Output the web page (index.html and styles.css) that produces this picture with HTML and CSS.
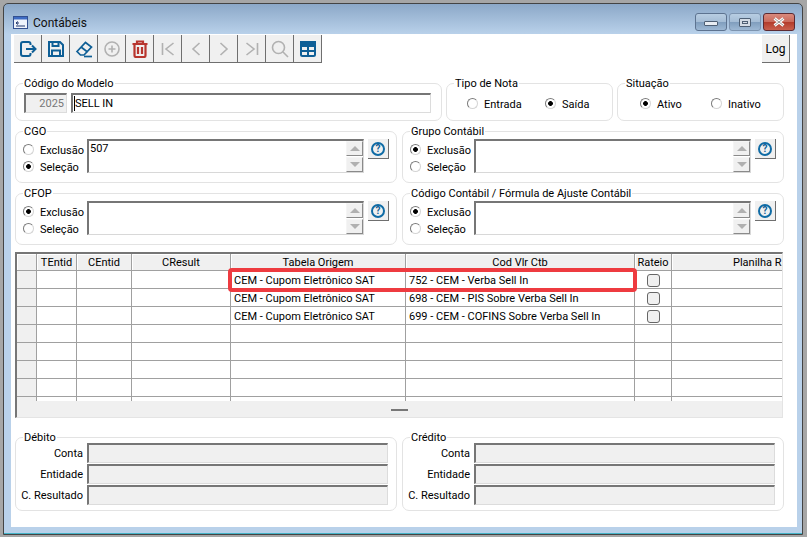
FILE: index.html
```html
<!DOCTYPE html>
<html lang="pt-BR">
<head>
<meta charset="utf-8">
<title>Contábeis</title>
<link rel="stylesheet" href="styles.css">
</head>
<body>
<div class="window">
  <header class="titlebar">
    <svg class="appicon" width="15" height="13" viewBox="0 0 15 13"><rect x="0.5" y="0.5" width="14" height="12" fill="#eef3fb" stroke="#33508f"/><rect x="1" y="1" width="13" height="2.5" fill="#3f6cc4"/><path d="M3 7h3M5 5.500 3 7l2 1.500M3 10h9" stroke="#22386e" fill="none"/></svg>
    <span class="wintitle">Contábeis</span>
    <div class="winbtns">
      <div class="winbtn"><span class="glyph-min"></span></div>
      <div class="winbtn"><span class="glyph-max"></span></div>
      <div class="winbtn close"><svg width="16" height="10" viewBox="0 0 16 10"><path d="M3.500 1.500 12.500 8.500M12.500 1.500 3.500 8.500" stroke="#fff" stroke-width="3" fill="none"/><path d="M3.500 1.500 12.500 8.500M12.500 1.500 3.500 8.500" stroke="#6b6b6b" stroke-width="0.700" fill="none"/></svg></div>
    </div>
  </header>
  <main class="client">
    <div class="toolbar-row">
      <div class="toolbar">
        <div class="tool"><svg class="ic blue" viewBox="0 0 18 18"><path d="M11.500 5V4a2 2 0 0 0-2-2H4a2 2 0 0 0-2 2v10a2 2 0 0 0 2 2h5.500a2 2 0 0 0 2-2v-1"/><path d="M7 9h9.500M13 5.500 16.500 9 13 12.500"/></svg></div>
        <div class="tool"><svg class="ic blue" viewBox="0 0 18 18"><path d="M2 2h11l3 3v11H2z"/><path d="M5.500 2v4h6V2M5 16v-5.500h8V16"/></svg></div>
        <div class="tool"><svg class="ic blue thin" viewBox="0 0 18 18"><path d="M2 11.500 10.500 2.500l6 4.500-7.500 8H5.500z"/><path d="M6 7 12.500 12"/><path d="M9 16.500h8"/></svg></div>
        <div class="tool"><svg class="ic gray" viewBox="0 0 18 18"><circle cx="9" cy="9" r="7"/><path d="M9 5.500v7M5.500 9h7"/></svg></div>
        <div class="tool"><svg class="ic red" viewBox="0 0 18 18"><path d="M1.500 4h15M6 3.500V1.500h6v2"/><path d="M3.500 4.500v11a1.500 1.500 0 0 0 1.500 1.500h8a1.500 1.500 0 0 0 1.500-1.500v-11M7 7v7M11 7v7"/></svg></div>
        <div class="tool"><svg class="ic gray" viewBox="0 0 18 18"><path d="M3.500 3v12M14.500 3 7 9l7.500 6"/></svg></div>
        <div class="tool"><svg class="ic gray" viewBox="0 0 18 18"><path d="M12.500 3 6 9l6.500 6"/></svg></div>
        <div class="tool"><svg class="ic gray" viewBox="0 0 18 18"><path d="M5.500 3 12 9l-6.500 6"/></svg></div>
        <div class="tool"><svg class="ic gray" viewBox="0 0 18 18"><path d="M3.500 3 11 9l-7.500 6M14.500 3v12"/></svg></div>
        <div class="tool"><svg class="ic gray" viewBox="0 0 18 18"><circle cx="7.500" cy="7.500" r="6"/><path d="M12 12l5 5"/></svg></div>
        <div class="tool"><svg class="ic blue" viewBox="0 0 18 18"><rect x="2" y="2" width="14" height="14" rx="1.500"/><path class="solid" d="M2 2h14v4H2z"/><path d="M9 6v10M2 11h14"/></svg></div>
      </div>
      <div class="tool log">Log</div>
    </div>

    <div class="row row-top">
      <section class="group g-model">
        <h2 class="legend">Código do Modelo</h2>
        <div class="model-fields">
          <div class="field code">2025</div>
          <div class="field name"><span class="caret">SELL IN</span></div>
        </div>
      </section>
      <section class="group g-note">
        <h2 class="legend">Tipo de Nota</h2>
        <div class="choice-row note-row">
          <label class="radio"><i class="dot"></i><span>Entrada</span></label>
          <label class="radio"><i class="dot on"></i><span>Saída</span></label>
        </div>
      </section>
      <section class="group g-status">
        <h2 class="legend">Situação</h2>
        <div class="choice-row status-row">
          <label class="radio"><i class="dot on"></i><span>Ativo</span></label>
          <label class="radio"><i class="dot"></i><span>Inativo</span></label>
        </div>
      </section>
    </div>

    <div class="row row-pair">
      <section class="group picker">
        <h2 class="legend">CGO</h2>
        <div class="radios">
          <label class="radio"><i class="dot"></i><span>Exclusão</span></label>
          <label class="radio"><i class="dot on"></i><span>Seleção</span></label>
        </div>
        <div class="memo"><span class="memo-text">507</span><div class="scroll"><span class="sb up"></span><span class="sb down"></span></div></div>
        <div class="help"><span class="q">?</span></div>
      </section>
      <section class="group picker">
        <h2 class="legend">Grupo Contábil</h2>
        <div class="radios">
          <label class="radio"><i class="dot on"></i><span>Exclusão</span></label>
          <label class="radio"><i class="dot"></i><span>Seleção</span></label>
        </div>
        <div class="memo"><span class="memo-text"></span><div class="scroll"><span class="sb up"></span><span class="sb down"></span></div></div>
        <div class="help"><span class="q">?</span></div>
      </section>
    </div>

    <div class="row row-pair">
      <section class="group picker">
        <h2 class="legend">CFOP</h2>
        <div class="radios">
          <label class="radio"><i class="dot on"></i><span>Exclusão</span></label>
          <label class="radio"><i class="dot"></i><span>Seleção</span></label>
        </div>
        <div class="memo"><span class="memo-text"></span><div class="scroll"><span class="sb up"></span><span class="sb down"></span></div></div>
        <div class="help"><span class="q">?</span></div>
      </section>
      <section class="group picker">
        <h2 class="legend">Código Contábil / Fórmula de Ajuste Contábil</h2>
        <div class="radios">
          <label class="radio"><i class="dot on"></i><span>Exclusão</span></label>
          <label class="radio"><i class="dot"></i><span>Seleção</span></label>
        </div>
        <div class="memo"><span class="memo-text"></span><div class="scroll"><span class="sb up"></span><span class="sb down"></span></div></div>
        <div class="help"><span class="q">?</span></div>
      </section>
    </div>

    <div class="gridbox">
      <div class="gridscroll">
        <table class="grid">
          <colgroup><col class="c0"><col class="c1"><col class="c2"><col class="c3"><col class="c4"><col class="c5"><col class="c6"><col class="c7"></colgroup>
          <thead><tr><th></th><th>TEntid</th><th>CEntid</th><th>CResult</th><th>Tabela Origem</th><th>Cod Vlr Ctb</th><th>Rateio</th><th class="partial">Planilha R.</th></tr></thead>
          <tbody>
            <tr><td class="ind"></td><td></td><td></td><td></td><td>CEM - Cupom Eletrônico SAT</td><td>752 - CEM - Verba Sell In</td><td class="chk"><span class="box"></span></td><td></td></tr>
            <tr><td class="ind"></td><td></td><td></td><td></td><td>CEM - Cupom Eletrônico SAT</td><td>698 - CEM - PIS Sobre Verba Sell In</td><td class="chk"><span class="box"></span></td><td></td></tr>
            <tr><td class="ind"></td><td></td><td></td><td></td><td>CEM - Cupom Eletrônico SAT</td><td>699 - CEM - COFINS Sobre Verba Sell In</td><td class="chk"><span class="box"></span></td><td></td></tr>
            <tr><td class="ind"></td><td></td><td></td><td></td><td></td><td></td><td></td><td></td></tr>
            <tr><td class="ind"></td><td></td><td></td><td></td><td></td><td></td><td></td><td></td></tr>
            <tr><td class="ind"></td><td></td><td></td><td></td><td></td><td></td><td></td><td></td></tr>
            <tr><td class="ind"></td><td></td><td></td><td></td><td></td><td></td><td></td><td></td></tr>
            <tr><td class="ind"></td><td></td><td></td><td></td><td></td><td></td><td></td><td></td></tr>
          </tbody>
        </table>
        <div class="highlight"></div>
      </div>
      <div class="gridfoot"><span class="grip"></span></div>
    </div>

    <div class="row row-pair row-bottom">
      <section class="group account">
        <h2 class="legend">Débito</h2>
        <div class="acc-row"><span class="acc-label">Conta</span><div class="field ro"></div></div>
        <div class="acc-row"><span class="acc-label">Entidade</span><div class="field ro"></div></div>
        <div class="acc-row"><span class="acc-label">C. Resultado</span><div class="field ro"></div></div>
      </section>
      <section class="group account">
        <h2 class="legend">Crédito</h2>
        <div class="acc-row"><span class="acc-label">Conta</span><div class="field ro"></div></div>
        <div class="acc-row"><span class="acc-label">Entidade</span><div class="field ro"></div></div>
        <div class="acc-row"><span class="acc-label">C. Resultado</span><div class="field ro"></div></div>
      </section>
    </div>
  </main>
</div>
</body>
</html>
```
FILE: styles.css
```css
* { box-sizing: border-box; }
html, body { margin: 0; height: 100%; }
body {
  width: 807px;
  height: 537px;
  padding: 3px;
  overflow: hidden;
  background: #a6a6a6;
  font-family: Roboto, "Liberation Sans", Arial, sans-serif;
  font-size: 11px;
  color: #000;
}
.window {
  width: 800px;
  height: 532px;
  border: 1px solid #444;
  border-radius: 5px 5px 0 0;
  padding: 0 5px 7px 7px;
  background: linear-gradient(#8ca8c8, #b9d1ea) top / 100% 30px no-repeat, #b9d1ea;
  box-shadow: inset 0 -1px 0 #45b4c8;
}
.titlebar {
  height: 30px;
  display: flex;
  align-items: flex-start;
  padding: 9px 2px 0;
}
.appicon { margin-top: 3px; flex: none; }
.wintitle { margin: 3px 0 0 5px; font-size: 12px; color: #101010; }
.winbtns { margin-left: auto; display: flex; gap: 2px; }
.winbtn {
  width: 32px;
  height: 18px;
  border: 1px solid #5d7390;
  border-radius: 3px;
  background: linear-gradient(#b8cde2 0, #a5bdd6 48%, #7f9dbd 50%, #9db8d4 100%);
  display: flex;
  align-items: center;
  justify-content: center;
}
.winbtn + .winbtn { border-color: #7d94b0; }
.winbtn.close {
  border-color: #5c2a32;
  background: linear-gradient(#d98a7e 0, #ca6a5c 48%, #b23a2a 50%, #c9604e 100%);
}
.glyph-min { width: 14px; height: 5px; margin-top: 3px; background: #e8edf3; border: 1px solid #4e5f74; border-radius: 1px; }
.glyph-max { width: 12px; height: 9px; background: #d3dbe5; border: 1px solid #4e5f74; border-radius: 1px; box-shadow: inset 0 0 0 2px #d3dbe5, inset 0 0 0 3px #4e5f74; }

.client {
  width: 786px;
  height: 493px;
  background: #fff;
  padding-top: 1px;
}
.toolbar-row { display: flex; padding: 0 7px 0 3px; justify-content: space-between; }
.toolbar { display: flex; }
.tool {
  width: 28px;
  height: 28px;
  background: #f0f0f0;
  border-right: 1px solid #6f6f6f;
  border-bottom: 1px solid #6f6f6f;
  display: flex;
  align-items: center;
  justify-content: center;
}
.tool.log { font-size: 12px; }
.ic { width: 18px; height: 18px; fill: none; stroke-width: 2; }
.ic.blue { stroke: #0f5f96; }
.ic.blue.thin { stroke-width: 1.700; }
.ic.gray { stroke: #b1b1b1; stroke-width: 1.600; }
.ic.red { stroke: #b8352e; stroke-width: 2.200; }
.ic .solid { fill: #0f5f96; }

.row { display: flex; margin: 10px 13px 0 4px; justify-content: space-between; }
.row-top { margin-top: 20px; height: 38px; }
.row-pair { height: 52px; }
.row-bottom { margin-top: 19px; height: 74px; }

.group {
  position: relative;
  border: 1px solid #e3e3e3;
  border-radius: 7px;
  background: #fff;
}
.legend {
  position: absolute;
  left: 7px;
  top: -7px;
  margin: 0;
  padding: 0 1px;
  background: #fff;
  font: inherit;
  line-height: 13px;
  white-space: nowrap;
}
.g-model { width: 427px; padding: 9px 0 0 8px; }
.g-note { width: 167px; margin-left: 4px; }
.g-status { width: 167px; margin-left: 4px; }
.model-fields { display: flex; gap: 4px; }

.field {
  height: 20px;
  border-style: solid;
  border-width: 2px 1px 1px 2px;
  border-color: #767676 #dcdcdc #dcdcdc #767676;
  line-height: 17px;
}
.field.code { width: 43px; background: #f0f0f0; color: #777; text-align: right; padding-right: 2px; }
.field.name { width: 360px; padding-left: 1px; background: #fff; }
.caret { border-left: 1px solid #000; display: inline-block; line-height: 15px; }
.field.ro { flex: 1; background: #f0f0f0; }

.choice-row { display: grid; }
.note-row { grid-template-columns: 78px auto; padding: 11px 0 0 20px; }
.status-row { grid-template-columns: 71px auto; padding: 11px 0 0 22px; }
.radio { display: flex; align-items: center; gap: 6px; height: 17px; }
.radio span { padding-top: 1px; }
.dot {
  flex: none;
  width: 11px;
  height: 11px;
  border-radius: 50%;
  border: 1px solid;
  border-color: #7b7b7b #d4d4d4 #d4d4d4 #7b7b7b;
  background: #fff;
}
.dot.on { background: radial-gradient(circle at center, #000 0, #000 2px, #fff 2.800px); }

.picker { width: 382px; display: flex; padding: 7px 0 0 7px; }
.radios { width: 64px; padding-top: 2px; flex: none; }
.memo {
  width: 277px;
  height: 34px;
  display: flex;
  border-style: solid;
  border-width: 2px 1px 1px 2px;
  border-color: #767676 #d8d8d8 #d8d8d8 #767676;
}
.memo-text { flex: 1; padding-left: 1px; line-height: 16px; }
.scroll { width: 17px; display: flex; flex-direction: column; gap: 1px; }
.sb {
  flex: 1;
  background: #f0f0f0;
  border: 1px solid #dcdcdc;
  border-color: #f5f5f5 #8a8a8a #8a8a8a #f5f5f5;
  display: flex;
  align-items: center;
  justify-content: center;
}
.sb::before { content: ""; border: 5px solid transparent; }
.sb.up::before { border-top: 0; border-bottom: 5px solid #b0b0b0; }
.sb.down::before { border-bottom: 0; border-top: 5px solid #b0b0b0; }
.help {
  width: 21px;
  height: 20px;
  margin-left: 4px;
  background: #f0f0f0;
  border-right: 1px solid #6f6f6f;
  border-bottom: 1px solid #6f6f6f;
  display: flex;
  align-items: center;
  justify-content: center;
}
.q {
  width: 14px;
  height: 14px;
  border: 2px solid #0f6ba5;
  border-radius: 50%;
  color: #0f5f96;
  font-weight: bold;
  font-size: 10px;
  line-height: 10px;
  text-align: center;
}

.gridbox {
  margin: 7px 14px 0 4px;
  height: 166px;
  border-style: solid;
  border-width: 2px 1px 1px 2px;
  border-color: #767676 #e4e4e4 #e4e4e4 #767676;
}
.gridscroll { position: relative; height: 147px; overflow: hidden; }
.grid { table-layout: fixed; width: 766px; border-collapse: separate; border-spacing: 0; }
.c0 { width: 20px; } .c1 { width: 40px; } .c2 { width: 55px; } .c3 { width: 99px; }
.c4 { width: 175px; } .c5 { width: 229px; } .c6 { width: 37px; } .c7 { width: 111px; }
.grid th, .grid td {
  padding: 1px 0 0 3px;
  border-right: 1px solid #a0a0a0;
  border-bottom: 1px solid #a0a0a0;
  white-space: nowrap;
  overflow: hidden;
}
.grid th:last-child, .grid td:last-child { border-right: 0; }
.grid th {
  height: 17px;
  padding: 1px 0 0;
  background: #f0f0f0;
  font-weight: normal;
  text-align: center;
  box-shadow: inset 1px 1px 0 #fff;
}
.grid th.partial { text-align: left; padding-left: 61px; }
.grid td { height: 18px; }
.grid td.ind { background: #f0f0f0; padding: 0; }
.grid td.chk { padding: 0; text-align: center; }
.box {
  display: block;
  width: 13px;
  height: 13px;
  margin: 2px 0 0 12px;
  background: #f0f0f0;
  border: 1px solid #666;
  border-radius: 3px;
}
.highlight {
  position: absolute;
  left: 211px;
  top: 14px;
  width: 409px;
  height: 24px;
  border: 4px solid #ee3b40;
  border-radius: 4px;
}
.gridfoot {
  height: 16px;
  background: #f0f0f0;
  display: flex;
  justify-content: center;
  padding-top: 8px;
}
.grip { width: 17px; height: 2px; background: #777; }

.account { width: 382px; padding: 5px 8px 0 0; }
.acc-row { display: flex; align-items: stretch; height: 21px; }
.acc-label { width: 71px; flex: none; padding: 1px 4px 0 0; text-align: right; line-height: 20px; }
```
